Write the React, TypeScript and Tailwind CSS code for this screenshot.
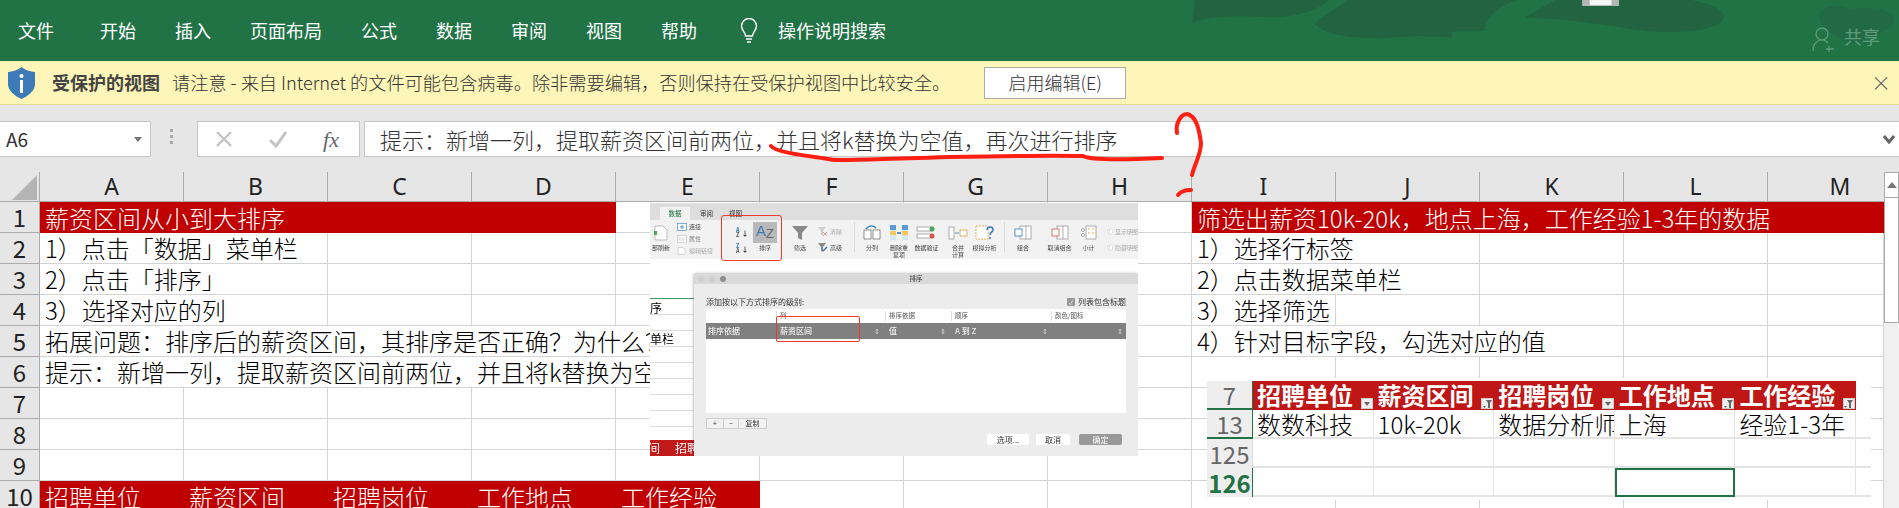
import React from "react";

const columns = ["A", "B", "C", "D", "E", "F", "G", "H", "I", "J", "K", "L", "M"];
const tabs = ["开始", "插入", "页面布局", "公式", "数据", "审阅", "视图", "帮助"];

type Cell = { span: number; text?: string; red?: boolean };

const col = (n: number) => (n === 13 ? 116 : 144);

function blanks(count: number): Cell[] {
  return Array.from({ length: count }, () => ({ span: 1 }));
}

const rows: Cell[][] = [
  [
    { span: 4, text: "薪资区间从小到大排序", red: true },
    ...blanks(4),
    { span: 5, text: "筛选出薪资10k-20k，地点上海，工作经验1-3年的数据", red: true },
  ],
  [{ span: 2, text: "1）点击「数据」菜单栏" }, ...blanks(6), { span: 2, text: "1）选择行标签" }, ...blanks(3)],
  [{ span: 2, text: "2）点击「排序」" }, ...blanks(6), { span: 2, text: "2）点击数据菜单栏" }, ...blanks(3)],
  [{ span: 2, text: "3）选择对应的列" }, ...blanks(6), { span: 1, text: "3）选择筛选" }, ...blanks(4)],
  [
    { span: 8, text: "拓展问题：排序后的薪资区间，其排序是否正确？为什么？" },
    { span: 3, text: "4）针对目标字段，勾选对应的值" },
    ...blanks(2),
  ],
  [{ span: 8, text: "提示：新增一列，提取薪资区间前两位，并且将k替换为空值，再次进行排序" }, ...blanks(5)],
  blanks(13),
  blanks(13),
  blanks(13),
  [
    { span: 1, text: "招聘单位", red: true },
    { span: 1, text: "薪资区间", red: true },
    { span: 1, text: "招聘岗位", red: true },
    { span: 1, text: "工作地点", red: true },
    { span: 1, text: "工作经验", red: true },
    ...blanks(8),
  ],
];

function Row({ index, cells }: { index: number; cells: Cell[] }) {
  let at = 0;
  return (
    <div className="flex h-[31px]">
      <div className="flex w-[40px] shrink-0 items-center justify-center border-b border-r border-[#ababab] bg-[#e6e6e6] text-[24px] leading-[30px] text-[#222]">
        {index}
      </div>
      {cells.map((cell, i) => {
        let width = 0;
        for (let k = 0; k < cell.span; k++) width += col(at + k + 1);
        at += cell.span;
        return (
          <div
            key={i}
            style={{ width }}
            className={
              cell.red
                ? "shrink-0 overflow-hidden whitespace-nowrap bg-[#c00000] pl-[5px] text-[24px] font-light leading-[31px] text-white"
                : "shrink-0 overflow-hidden whitespace-nowrap border-b border-r border-[#d4d4d4] bg-white pl-[5px] text-[24px] font-light leading-[30px] text-black"
            }
          >
            {cell.text}
          </div>
        );
      })}
    </div>
  );
}

function RibbonArt() {
  return (
    <svg className="absolute left-[950px] top-0 h-[61px] w-[949px]" viewBox="0 0 1568 183" preserveAspectRatio="none">
      <path d="M405 0 L400 68 C430 50 470 45 520 52 C570 55 610 30 625 0 Z" fill="#21643f" />
      <path d="M655 0 C640 30 610 50 603 72 C625 115 690 122 770 108 L828 112 L830 95 C850 92 870 96 884 92 C884 60 900 25 935 0 Z" fill="#21643f" />
      <path d="M950 52 C1020 55 1090 80 1150 92 C1200 102 1260 92 1275 65 C1290 35 1260 12 1225 0 L1000 0 Z" fill="#21643f" />
      <path d="M1436 55 C1436 20 1465 5 1490 30 C1510 15 1560 25 1560 60 C1560 90 1520 115 1490 130 C1465 110 1440 90 1436 55 Z" fill="#226a45" />
      <rect x="1045" y="0" width="60" height="17" fill="#f4f4f4" />
      <rect x="1045" y="0" width="12" height="17" fill="#b5b5b5" />
      <rect x="1093" y="0" width="12" height="17" fill="#b5b5b5" />
    </svg>
  );
}

function Ribbon() {
  return (
    <div className="relative flex h-[61px] items-center gap-[39px] overflow-hidden bg-[#217346] pl-[18px] text-[18px] text-white">
      <RibbonArt />
      <span className="relative mr-[7px]">文件</span>
      {tabs.map((t) => (
        <span key={t} className="relative">
          {t}
        </span>
      ))}
      <div className="relative ml-[3px] flex items-center gap-[19px]">
        <svg width="20" height="26" viewBox="0 0 20 26" fill="none" stroke="#fff" strokeWidth="1.4">
          <path d="M6.5 18 C6.5 14 2.5 12.5 2.5 8 A7.5 7.5 0 0 1 17.5 8 C17.5 12.5 13.5 14 13.5 18 Z" />
          <path d="M7 21 H13 M8 24 H12" />
        </svg>
        <span>操作说明搜索</span>
      </div>
      <div className="absolute right-[19px] top-[26px] flex items-center gap-[8px] text-[18px] text-[#5f9c7c]">
        <svg width="24" height="26" viewBox="0 0 24 26" fill="none" stroke="#5f9c7c" strokeWidth="1.3">
          <circle cx="10" cy="8" r="6" />
          <path d="M1 25 C1 18 5 15 8 14 M12 14 C14 15 15 16 16 17 M17 20 V26 M14 23 H22" />
        </svg>
        <span className="-mt-[6px]">共享</span>
      </div>
    </div>
  );
}

function ProtectedBar() {
  return (
    <div className="flex h-[44px] items-center border-b border-[#e3dc93] bg-[#fdf6b8] text-[18px] font-light text-[#333]">
      <svg className="ml-[8px]" width="27" height="32" viewBox="0 0 27 32">
        <path d="M13.5 0 C17 3 22 4.5 27 5 V17 C27 24 20 29 13.5 32 C7 29 0 24 0 17 V5 C5 4.5 10 3 13.5 0 Z" fill="#3f7ab8" />
        <circle cx="13.5" cy="9" r="2" fill="#fff" />
        <rect x="12" y="13" width="3" height="13" fill="#fff" />
      </svg>
      <span className="ml-[17px] font-bold text-[#444]">受保护的视图</span>
      <span className="ml-[12px] whitespace-nowrap text-[18.2px]">请注意 - 来自 Internet 的文件可能包含病毒。除非需要编辑，否则保持在受保护视图中比较安全。</span>
      <button className="ml-[34px] flex h-[32px] w-[142px] items-center justify-center border border-[#ababab] bg-white text-[18px] font-light text-[#333]">
        启用编辑(E)
      </button>
      <span className="ml-auto mr-[8px] text-[20px] text-[#555]">×</span>
    </div>
  );
}

function FormulaBar() {
  return (
    <div className="flex h-[67px] items-start pt-[16px]">
      <div className="flex h-[36px] w-[151px] items-center justify-between border-y border-r border-[#c6c6c6] bg-white pl-[6px] pr-[8px] text-[19px] text-[#333]">
        <span>A6</span>
        <span className="h-0 w-0 border-x-[4px] border-t-[5px] border-x-transparent border-t-[#777]" />
      </div>
      <div className="ml-[19px] mr-[24px] mt-[8px] flex flex-col gap-[3px]">
        <span className="h-[3px] w-[3px] bg-[#aaa]" />
        <span className="h-[3px] w-[3px] bg-[#aaa]" />
        <span className="h-[3px] w-[3px] bg-[#aaa]" />
      </div>
      <div className="flex h-[36px] w-[163px] items-center justify-between border border-[#c6c6c6] bg-white pl-[17px] pr-[20px]">
        <svg width="18" height="18" viewBox="0 0 18 18" stroke="#c3c3c3" strokeWidth="2.4" fill="none">
          <path d="M2 2 L16 16 M16 2 L2 16" />
        </svg>
        <svg width="20" height="18" viewBox="0 0 20 18" stroke="#c3c3c3" strokeWidth="3" fill="none">
          <path d="M2 10 L8 16 L18 2" />
        </svg>
        <span className="font-['Liberation_Serif',serif] text-[22px] italic text-[#666]">fx</span>
      </div>
      <div className="ml-[4px] flex h-[36px] flex-1 items-center justify-between border-y border-l border-[#c6c6c6] bg-white pl-[15px] pr-[4px] text-[22px] font-light text-[#333]">
        <span>提示：新增一列，提取薪资区间前两位，并且将k替换为空值，再次进行排序</span>
        <svg width="12" height="10" viewBox="0 0 12 10" fill="none" stroke="#666" strokeWidth="3">
          <path d="M1 2 L6 8 L11 2" />
        </svg>
      </div>
    </div>
  );
}

function Sheet() {
  return (
    <div className="flex">
      <div className="w-[1884px]">
        <div className="flex h-[30px]">
          <div className="relative w-[40px] shrink-0 border-b border-r border-[#ababab] bg-[#e6e6e6]">
            <svg className="absolute left-[12px] top-[3px]" width="25" height="25" viewBox="0 0 26 26">
              <path d="M26 0 V26 H0 Z" fill="#b4b4b4" />
            </svg>
          </div>
          {columns.map((c, i) => (
            <div
              key={c}
              style={{ width: col(i + 1) }}
              className={
                c === "M"
                  ? "flex shrink-0 items-center justify-center border-b border-[#ababab] bg-[#e6e6e6] pl-[28px] font-['Noto_Sans','Liberation_Sans',sans-serif] text-[23px] leading-[29px] text-[#222]"
                  : "flex shrink-0 items-center justify-center border-b border-r border-[#ababab] bg-[#e6e6e6] font-['Noto_Sans','Liberation_Sans',sans-serif] text-[23px] leading-[29px] text-[#222]"
              }
            >
              {c}
            </div>
          ))}
        </div>
        {rows.map((cells, i) => (
          <Row key={i} index={i + 1} cells={cells} />
        ))}
      </div>
      <div className="flex w-[15px] flex-col bg-[#f0f0f0]">
        <div className="flex h-[26px] items-center justify-center border border-[#ababab] bg-white">
          <span className="h-0 w-0 border-x-[5px] border-b-[6px] border-x-transparent border-b-[#777]" />
        </div>
        <div className="h-[125px] border-x border-b border-[#ababab] bg-white" />
      </div>
    </div>
  );
}

function MiniIcon({ kind }: { kind: string }) {
  if (kind === "doc")
    return (
      <svg width="14" height="16" viewBox="0 0 14 16" fill="#fff" stroke="#bbb">
        <path d="M1 1 H9 L13 5 V15 H1 Z" />
        <rect x="0" y="6" width="3" height="4" fill="#58a55c" stroke="none" />
      </svg>
    );
  if (kind === "funnel")
    return (
      <svg width="16" height="16" viewBox="0 0 16 16" fill="#8a8a8a">
        <path d="M0 1 H16 L10 8 V15 L6 13 V8 Z" />
      </svg>
    );
  if (kind === "split")
    return (
      <svg width="18" height="15" viewBox="0 0 18 15" fill="#fff" stroke="#777" strokeWidth="0.8">
        <rect x="1" y="5" width="7" height="9" />
        <rect x="10" y="5" width="7" height="9" />
        <path d="M3 4 C6 0 10 0 13 3" stroke="#2d7bc4" strokeWidth="1.4" fill="none" />
      </svg>
    );
  if (kind === "dedupe")
    return (
      <svg width="18" height="15" viewBox="0 0 18 15">
        <rect x="0" y="0" width="6" height="15" fill="#d6e7f5" />
        <rect x="12" y="0" width="6" height="15" fill="#d6e7f5" />
        <rect x="0" y="0" width="6" height="5" fill="#5b9bd5" />
        <rect x="12" y="0" width="6" height="5" fill="#5b9bd5" />
        <rect x="0" y="6" width="6" height="4" fill="#f5c75c" />
        <rect x="12" y="6" width="6" height="4" fill="#f5c75c" />
        <path d="M7 8 H11" stroke="#2d7bc4" strokeWidth="1.6" />
      </svg>
    );
  if (kind === "valid")
    return (
      <svg width="22" height="15" viewBox="0 0 22 15" fill="#fff" stroke="#999" strokeWidth="0.8">
        <rect x="1" y="2" width="15" height="4" />
        <rect x="1" y="9" width="15" height="4" />
        <circle cx="16" cy="4" r="2.5" fill="#4aa564" stroke="none" />
        <circle cx="16" cy="11" r="2.5" fill="#d9534f" stroke="none" />
      </svg>
    );
  if (kind === "merge")
    return (
      <svg width="20" height="14" viewBox="0 0 20 14" fill="#fff" stroke="#999" strokeWidth="0.8">
        <rect x="1" y="1" width="5" height="12" />
        <rect x="12" y="4" width="7" height="6" stroke="#e0a040" />
        <path d="M7 7 H11" stroke="#2d7bc4" />
      </svg>
    );
  if (kind === "whatif")
    return (
      <svg width="20" height="15" viewBox="0 0 20 15" fill="#fff" stroke="#bbb" strokeWidth="0.8">
        <rect x="1" y="1" width="12" height="13" strokeDasharray="2 1" stroke="#e0a040" />
        <path d="M12 5 C12 1 18 1 18 5 C18 7 15 7 15 10 M15 12 V14" stroke="#2d7bc4" strokeWidth="1.5" fill="none" />
      </svg>
    );
  if (kind === "group")
    return (
      <svg width="18" height="15" viewBox="0 0 18 15" fill="#fff" stroke="#999" strokeWidth="0.8">
        <rect x="6" y="1" width="11" height="13" />
        <path d="M12 1 V14" />
        <rect x="1" y="4" width="7" height="7" stroke="#2d7bc4" />
      </svg>
    );
  if (kind === "ungroup")
    return (
      <svg width="18" height="15" viewBox="0 0 18 15" fill="#fff" stroke="#999" strokeWidth="0.8">
        <rect x="6" y="1" width="11" height="13" />
        <path d="M12 1 V14" />
        <rect x="1" y="4" width="7" height="7" stroke="#d9534f" />
      </svg>
    );
  return (
    <svg width="16" height="15" viewBox="0 0 16 15" fill="#fff" stroke="#999" strokeWidth="0.8">
      <rect x="5" y="1" width="10" height="13" />
      <path d="M7 4 H9 M11 4 H13 M7 8 H9 M11 8 H13" stroke="#e0a040" />
      <circle cx="2" cy="5" r="1.5" />
      <circle cx="2" cy="10" r="1.5" />
    </svg>
  );
}

function SmallIcon({ kind }: { kind: string }) {
  if (kind === "link")
    return (
      <svg width="10" height="8" viewBox="0 0 10 8" fill="#fff" stroke="#5b9bd5" strokeWidth="0.8">
        <rect x="0.5" y="0.5" width="9" height="7" />
        <path d="M5 2 V6 M3 4 H7" stroke="#2d7bc4" />
      </svg>
    );
  if (kind === "prop")
    return (
      <svg width="10" height="8" viewBox="0 0 10 8" fill="#fff" stroke="#ccc" strokeWidth="0.8">
        <rect x="0.5" y="0.5" width="9" height="7" />
        <path d="M2 3 H8 M2 5 H8" />
      </svg>
    );
  if (kind === "edit")
    return (
      <svg width="10" height="8" viewBox="0 0 10 8" fill="#fff" stroke="#ccc" strokeWidth="0.8">
        <path d="M1 0.5 H6 L8 2.5 V7.5 H1 Z" />
      </svg>
    );
  if (kind === "clear")
    return (
      <svg width="10" height="9" viewBox="0 0 10 9" fill="#cfcfcf">
        <path d="M0 0 H8 L5 4 V9 L3 8 V4 Z" />
        <path d="M5 5 L9 9 M9 5 L5 9" stroke="#e79b96" strokeWidth="1" />
      </svg>
    );
  if (kind === "advanced")
    return (
      <svg width="10" height="9" viewBox="0 0 10 9" fill="#8a8a8a">
        <path d="M0 0 H8 L5 4 V9 L3 8 V4 Z" />
        <path d="M5 8 L9 4" stroke="#2d7bc4" strokeWidth="1.4" />
      </svg>
    );
  return (
    <svg width="10" height="9" viewBox="0 0 10 9" fill="#fff" stroke="#ccc" strokeWidth="0.8">
      <rect x="3" y="0.5" width="6.5" height="8" />
      <rect x="0.5" y="2.5" width="4" height="4" />
    </svg>
  );
}

function SmallRow({ kind, label, className }: { kind: string; label: string; className: string }) {
  return (
    <span className={"flex items-center gap-[2px] whitespace-nowrap " + className}>
      <SmallIcon kind={kind} />
      {label}
    </span>
  );
}

function MiniTool({ label, kind, className }: { label: string; kind: string; className: string }) {
  return (
    <div className={"flex shrink-0 flex-col items-center " + className}>
      <div className="flex h-[21px] items-center">
        <MiniIcon kind={kind} />
      </div>
      <div className="mt-[1px] text-center leading-[7px]">{label}</div>
    </div>
  );
}

function SortKey({ top, bottom }: { top: string; bottom: string }) {
  return (
    <div className="flex items-center gap-[2px]">
      <span className="flex flex-col text-[5.5px] font-bold leading-[5px]">
        <span className="text-[#3276b9]">{top}</span>
        <span className="text-[#555]">{bottom}</span>
      </span>
      <span className="text-[7px] font-bold leading-[7px] text-[#333]">↓</span>
    </div>
  );
}

function MiniRibbon() {
  return (
    <>
      <div className="flex h-[17px] items-end bg-[#dedede] pl-[10px] text-[6.5px] leading-[7px] text-[#333]">
        <div className="flex h-[13px] w-[30px] items-center justify-center bg-[#f2f2f2] font-medium text-[#2f7d4f]">数据</div>
        <span className="mb-[3px] ml-[10px]">审阅</span>
        <span className="mb-[3px] ml-[16px]">视图</span>
      </div>
      <div className="flex h-[39px] bg-[#f2f2f2] pt-[2px] text-[6px] text-[#444]">
        <MiniTool label="部刷新" kind="doc" className="w-[22px]" />
        <div className="ml-[5px] flex w-[40px] shrink-0 flex-col gap-[4px] pt-[1px] leading-[8px]">
          <SmallRow kind="link" label="连接" className="" />
          <SmallRow kind="prop" label="属性" className="text-[#888]" />
          <SmallRow kind="edit" label="编辑链接" className="text-[#aaa]" />
        </div>
        <div className="ml-[19px] flex w-[14px] shrink-0 flex-col gap-[6px] pt-[6px]">
          <SortKey top="A" bottom="Z" />
          <SortKey top="Z" bottom="A" />
        </div>
        <div className="ml-[3px] flex w-[24px] shrink-0 flex-col items-center">
          <div className="flex h-[21px] w-[24px] items-center justify-center bg-[#b9b9b9] font-['Liberation_Sans',sans-serif] leading-[14px]">
            <span className="-mt-[3px] text-[15px] text-[#3f79b0]">A</span>
            <span className="mt-[3px] text-[13px] text-[#666]">Z</span>
          </div>
          <div className="mt-[1px] leading-[7px]">排序</div>
        </div>
        <MiniTool label="筛选" kind="funnel" className="ml-[15px] w-[16px]" />
        <div className="ml-[10px] flex w-[28px] shrink-0 flex-col gap-[7px] pt-[5px] leading-[9px]">
          <SmallRow kind="clear" label="清除" className="text-[#aaa]" />
          <SmallRow kind="advanced" label="高级" className="" />
        </div>
        <div className="ml-[8px] h-[30px] w-px shrink-0 bg-[#dcdcdc]" />
        <MiniTool label="分列" kind="split" className="ml-[8px] w-[18px]" />
        <MiniTool label="删除重复项" kind="dedupe" className="ml-[9px] w-[18px]" />
        <MiniTool label="数据验证" kind="valid" className="ml-[5px] w-[27px]" />
        <MiniTool label="合并计算" kind="merge" className="ml-[10px] w-[16px]" />
        <MiniTool label="模拟分析" kind="whatif" className="ml-[6px] w-[25px]" />
        <div className="ml-[7px] h-[30px] w-px shrink-0 bg-[#dcdcdc]" />
        <MiniTool label="组合" kind="group" className="ml-[9px] w-[18px]" />
        <MiniTool label="取消组合" kind="ungroup" className="ml-[14px] w-[27px]" />
        <MiniTool label="小计" kind="subtotal" className="ml-[8px] w-[15px]" />
        <div className="ml-[11px] flex w-[32px] shrink-0 flex-col gap-[7px] pt-[5px] leading-[9px] text-[#aaa]">
          <SmallRow kind="detail" label="显示明细" className="" />
          <SmallRow kind="detail" label="隐藏明细" className="" />
        </div>
      </div>
    </>
  );
}

function Chevrons() {
  return <span className="text-[7px] leading-[7px] text-[#d8d8d8]">⇕</span>;
}

function SortDialog() {
  return (
    <div className="absolute bottom-0 left-[44px] right-0 top-[71px] flex flex-col bg-[#ececec] text-[8px] text-[#333] shadow-[0_0_3px_rgba(0,0,0,0.4)]">
      <div className="relative flex h-[10px] items-center justify-center bg-[#d9d9d9] text-[6.5px]">
        <div className="absolute left-[4px] flex gap-[5px]">
          <span className="h-[6px] w-[6px] rounded-full bg-[#cfcfcf]" />
          <span className="h-[6px] w-[6px] rounded-full bg-[#cfcfcf]" />
          <span className="h-[6px] w-[6px] rounded-full bg-[#8e8e8e]" />
        </div>
        排序
      </div>
      <div className="mx-[12px] mt-[12px] flex h-[12px] items-center justify-between">
        <span>添加按以下方式排序的级别:</span>
        <span className="flex items-center gap-[3px]">
          <span className="flex h-[8px] w-[8px] items-center justify-center rounded-[1px] bg-[#999] text-[6px] text-white">✓</span>
          列表包含标题
        </span>
      </div>
      <div className="relative mx-[12px] mt-[1px] h-[104px] bg-white">
        <div className="flex h-[14px] items-center text-[6.5px] text-[#555]">
          <span className="w-[70px]" />
          <span className="w-[109px] border-l border-[#ddd] pl-[3px]">列</span>
          <span className="w-[66px] border-l border-[#ddd] pl-[3px]">排序依据</span>
          <span className="w-[100px] border-l border-[#ddd] pl-[3px]">顺序</span>
          <span className="border-l border-[#ddd] pl-[3px]">颜色/图标</span>
        </div>
        <div className="flex h-[16px] items-center bg-[#808080] font-medium text-[#f0f0f0]">
          <span className="w-[70px] pl-[2px]">排序依据</span>
          <span className="flex w-[109px] items-center justify-between pl-[4px] pr-[5px]">
            薪资区间 <Chevrons />
          </span>
          <span className="flex w-[66px] items-center justify-between pl-[4px] pr-[5px]">
            值 <Chevrons />
          </span>
          <span className="flex w-[100px] items-center justify-between pl-[4px] pr-[3px]">
            A 到 Z <Chevrons />
          </span>
          <span className="flex flex-1 justify-end pr-[3px]">
            <Chevrons />
          </span>
        </div>
        <div className="absolute left-[70px] top-[7px] h-[26px] w-[84px] rounded-[2px] border border-[#f23a2c]" />
      </div>
      <div className="ml-[12px] mt-[5px] flex h-[11px] w-[61px] items-center border border-[#cfcfcf] bg-[#f2f2f2] text-[7px]">
        <span className="w-[16px] text-center">+</span>
        <span className="w-[16px] border-x border-[#cfcfcf] text-center">−</span>
        <span className="flex-1 text-center">复制</span>
      </div>
      <div className="mr-[16px] mt-[5px] flex justify-end gap-[7px]">
        <span className="flex h-[11px] w-[42px] items-center justify-center rounded-[1px] bg-white">选项...</span>
        <span className="flex h-[11px] w-[34px] items-center justify-center rounded-[1px] bg-white">取消</span>
        <span className="ml-[2px] flex h-[11px] w-[43px] items-center justify-center rounded-[2px] bg-[#999] text-white">确定</span>
      </div>
    </div>
  );
}

function SortScreenshot() {
  return (
    <div className="absolute left-[650px] top-[203px] h-[253px] w-[488px] overflow-hidden bg-white blur-[0.4px]">
      <MiniRibbon />
      <div className="absolute left-0 top-[95px] h-[145px] w-[44px] border-t border-[#3f9a66] bg-[repeating-linear-gradient(0deg,#dcdcdc_0,#dcdcdc_1px,#fff_1px,#fff_16px)] text-[12px] leading-[14px] text-black">
        <span className="block pt-[2px]">序</span>
        <span className="mt-[17px] block">单栏</span>
      </div>
      <div className="absolute bottom-0 left-0 flex h-[16px] w-[250px] items-center gap-[15px] bg-[#c21a1a] text-[12px] text-white">
        <span className="-ml-[2px]">间</span>
        <span>招聘</span>
      </div>
      <SortDialog />
      <div className="absolute left-[71px] top-[12px] h-[46px] w-[61px] rounded-[3px] border border-[#f23a2c]" />
    </div>
  );
}

const jobHeads = ["招聘单位", "薪资区间", "招聘岗位", "工作地点", "工作经验"];
const jobRow = ["数数科技", "10k-20k", "数据分析师", "上海", "经验1-3年"];

function FilterMark({ active }: { active: boolean }) {
  return (
    <span className="absolute bottom-[1px] right-[1px] flex h-[11px] w-[12px] items-center justify-center border border-[#ccc] bg-[#eee]">
      {active ? (
        <svg width="9" height="8" viewBox="0 0 9 8" fill="#666">
          <path d="M3 0 H9 L7 3 V8 H5 V3 Z M0 6 L3 6 L1.5 8 Z" />
        </svg>
      ) : (
        <span className="h-0 w-0 border-x-[3px] border-t-[4px] border-x-transparent border-t-[#666]" />
      )}
    </span>
  );
}

function JobTable() {
  return (
    <div className="absolute left-[1207px] top-[378px] h-[122px] w-[664px] bg-white pt-[3px]">
      <div className="flex h-[29px]">
        <div className="flex w-[46px] shrink-0 items-center justify-center border-b-2 border-r border-[#217346] bg-[#eeeeee] text-[24px] leading-[27px] text-[#666]">7</div>
        {jobHeads.map((h, i) => (
          <div key={h} className="relative w-[120.6px] shrink-0 overflow-hidden whitespace-nowrap bg-[#bf1616] pl-[4px] text-[24px] font-bold leading-[28px] text-white">
            {h}
            <FilterMark active={i % 2 === 1 || i === 4} />
          </div>
        ))}
      </div>
      <div className="flex h-[29px]">
        <div className="flex w-[46px] shrink-0 items-center justify-center border-b-2 border-r border-[#217346] bg-[#eeeeee] text-[24px] leading-[27px] text-[#666]">13</div>
        {jobRow.map((t) => (
          <div key={t} className="w-[120.6px] shrink-0 overflow-hidden whitespace-nowrap border-b-2 border-r border-[#e4e4e4] pl-[4px] text-[24px] font-light leading-[27px] text-black">
            {t}
          </div>
        ))}
        <div className="flex-1 border-b-2 border-[#e4e4e4]" />
      </div>
      <div className="flex h-[29px]">
        <div className="flex w-[46px] shrink-0 items-center justify-center border-r border-[#ddd] bg-[#eeeeee] text-[24px] leading-[27px] text-[#666]">125</div>
        {jobHeads.map((h) => (
          <div key={h} className="w-[120.6px] shrink-0 border-b-2 border-r border-[#e4e4e4]" />
        ))}
        <div className="flex-1 border-b-2 border-[#e4e4e4]" />
      </div>
      <div className="flex h-[29px]">
        <div className="flex w-[46px] shrink-0 items-center justify-center border-r border-[#217346] bg-[#eeeeee] text-[24px] font-bold leading-[27px] text-[#217346]">126</div>
        {jobHeads.map((h, i) => (
          <div
            key={h}
            className={
              i === 3
                ? "relative w-[120.6px] shrink-0 border-2 border-[#217346]"
                : "w-[120.6px] shrink-0 border-b-2 border-r border-[#e4e4e4]"
            }
          />
        ))}
        <div className="flex-1 border-b-2 border-[#e4e4e4]" />
      </div>
    </div>
  );
}

function Scribble() {
  return (
    <svg className="pointer-events-none absolute left-0 top-0" width="1899" height="508" fill="none" stroke="#ff1f12" strokeWidth="4" strokeLinecap="round">
      <path d="M771 146 C775 152 800 155 836 160 C860 160 890 159 950 157 C1000 156 1050 155 1083 156 C1090 160 1120 160 1162 158" />
      <path d="M1177 133 C1175 122 1182 114 1187 114 C1196 116 1199 128 1201 143 C1201 155 1194 165 1192 175" />
      <path d="M1178 195 C1181 191 1186 190 1191 190" />
    </svg>
  );
}

export default function App() {
  return (
    <div className="relative h-[508px] w-[1899px] overflow-hidden bg-[#e6e6e6] font-['Noto_Sans_CJK_SC','Liberation_Sans',sans-serif]">
      <Ribbon />
      <ProtectedBar />
      <FormulaBar />
      <Sheet />
      <SortScreenshot />
      <JobTable />
      <Scribble />
    </div>
  );
}
